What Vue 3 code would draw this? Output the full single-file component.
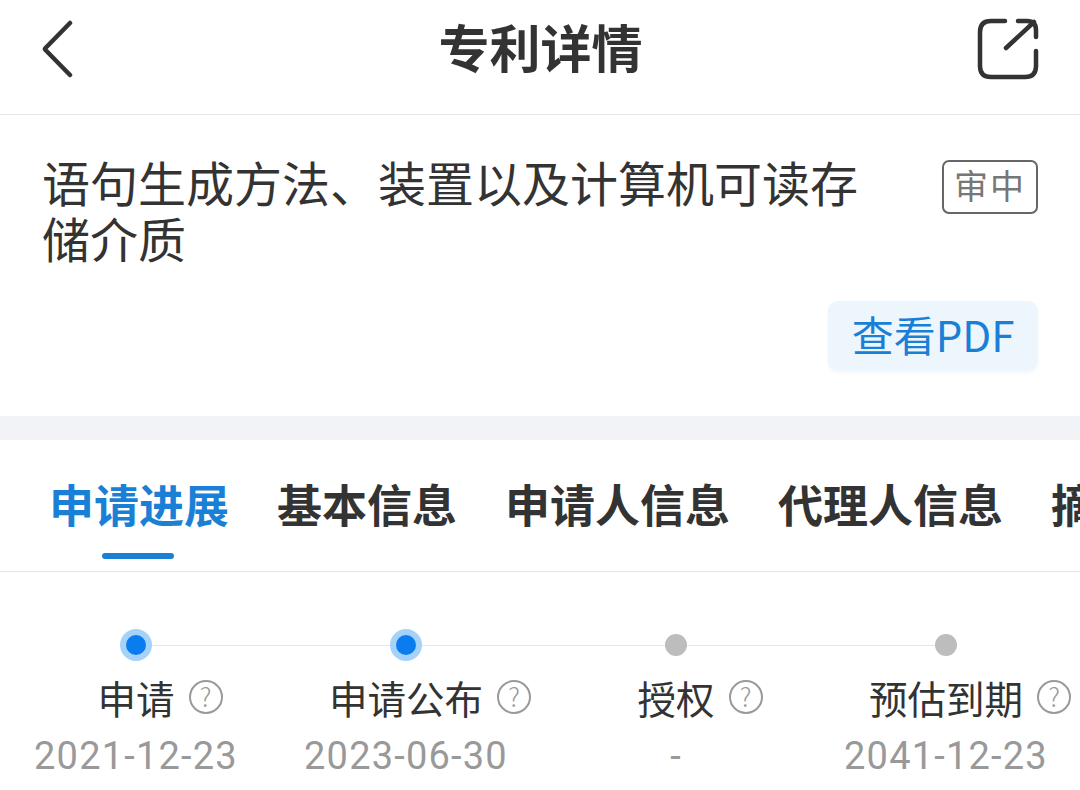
<script setup>
const tabs = ["申请进展", "基本信息", "申请人信息", "代理人信息", "摘要"];
const steps = [
  { name: "申请", date: "2021-12-23", done: true },
  { name: "申请公布", date: "2023-06-30", done: true },
  { name: "授权", date: "-", done: false },
  { name: "预估到期", date: "2041-12-23", done: false },
];
</script>

<template>
  <div class="page">
    <header class="nav">
      <svg class="back" width="34" height="60" viewBox="0 0 34 60">
        <path d="M28 4 L3.5 29 Q2.5 30 3.5 31 L28 56" />
      </svg>
      <h1 class="nav-title">专利详情</h1>
      <svg class="share" width="62" height="62" viewBox="0 0 62 62">
        <path d="M28 3 H14 Q3 3 3 14 V48 Q3 59 14 59 H48 Q59 59 59 48 V33" />
        <path d="M41 3 H50 Q59 3 59 12 V19" />
        <path d="M29 30 L57 4" />
      </svg>
    </header>

    <section class="summary">
      <div class="title-row">
        <h2 class="title">语句生成方法、装置以及计算机可读存储介质</h2>
        <span class="status">审中</span>
      </div>
      <div class="actions">
        <button class="pdf">查看PDF</button>
      </div>
    </section>

    <div class="band"></div>

    <nav class="tabs">
      <span
        v-for="(tab, i) in tabs"
        :key="tab"
        :class="['tab', { active: i === 0 }]"
      >{{ tab }}</span>
    </nav>

    <section class="steps">
      <div v-for="(step, i) in steps" :key="step.name" class="step">
        <div class="track">
          <i v-if="i > 0" class="line"></i>
          <span :class="['dot', { done: step.done }]"></span>
        </div>
        <div class="label">
          {{ step.name }}
          <span class="help">?</span>
        </div>
        <div class="date">{{ step.date }}</div>
      </div>
    </section>
  </div>
</template>

<style scoped>
.page {
  width: 1080px;
  height: 790px;
  overflow: hidden;
  background: #fff;
  color: #333;
  font-family: "Noto Sans CJK SC", "Noto Sans", sans-serif;
}

/* NAV */
.nav {
  height: 98px;
  border-bottom: 1px solid #e6e6e6;
  padding: 0 41px 16px 42px;
  display: grid;
  grid-template-columns: 1fr auto 1fr;
  align-items: center;
}
.nav svg {
  fill: none;
  stroke: #333;
  stroke-width: 4.5;
  stroke-linecap: round;
  stroke-linejoin: round;
}
.share {
  justify-self: end;
}
.nav-title {
  margin: 0 0 6px;
  font-size: 51px;
  line-height: 92px;
  font-weight: 700;
}

/* SUMMARY */
.summary {
  height: 301px;
  box-sizing: border-box;
  padding: 38px 42px 0;
}
.title-row {
  display: flex;
  justify-content: space-between;
  align-items: flex-start;
}
.title {
  margin: 0;
  width: 820px;
  font-size: 48px;
  line-height: 56px;
  font-weight: 400;
}
.status {
  margin-top: 7px;
  width: 96px;
  height: 54px;
  box-sizing: border-box;
  border: 2px solid #666;
  border-radius: 7px;
  color: #777;
  font-size: 34px;
  line-height: 46px;
  letter-spacing: 2px;
  text-align: center;
}
.actions {
  display: flex;
  justify-content: flex-end;
  margin-top: 36px;
}
.pdf {
  width: 210px;
  height: 70px;
  border: 0;
  border-radius: 10px;
  padding: 0 0 4px;
  background: #eef6fd;
  box-shadow: 0 2px 4px #f3f7fb;
  color: #1a80d6;
  font-family: inherit;
  font-size: 42px;
  line-height: 66px;
}
.band {
  height: 24px;
  background: #f2f3f6;
}

/* TABS */
.tabs {
  height: 131px;
  border-bottom: 1px solid #e6e6e6;
  padding-left: 49px;
  display: flex;
  gap: 48px;
  white-space: nowrap;
  overflow: hidden;
}
.tab {
  position: relative;
  font-size: 45px;
  line-height: 128px;
  font-weight: 700;
}
.tab.active {
  color: #1a80d6;
}
.tab.active::after {
  content: "";
  position: absolute;
  left: 53px;
  bottom: 12px;
  width: 72px;
  height: 6px;
  border-radius: 3px;
  background: #1a80d6;
}

/* STEPS */
.steps {
  display: grid;
  grid-template-columns: repeat(4, 270px);
  padding: 56px 0 0 1px;
}
.step {
  display: flex;
  flex-direction: column;
  align-items: center;
}
.track {
  position: relative;
  width: 100%;
  height: 34px;
  display: flex;
  align-items: center;
  justify-content: center;
}
.line {
  position: absolute;
  left: -135px;
  right: 135px;
  top: 17px;
  height: 1px;
  background: #e6e6e6;
}
.dot {
  position: relative;
  z-index: 1;
  width: 22px;
  height: 22px;
  border-radius: 50%;
  background: #bdbdbd;
}
.dot.done {
  width: 20px;
  height: 20px;
  background: #0a7cf0;
  border: 6px solid #a5d2f8;
}
.label {
  position: relative;
  margin-top: 10px;
  font-size: 38.5px;
  line-height: 50px;
  color: #333;
}
.help {
  position: absolute;
  left: 100%;
  top: 8px;
  margin-left: 14px;
  width: 34px;
  height: 34px;
  box-sizing: border-box;
  border: 2.5px solid #999;
  border-radius: 50%;
  color: #999;
  font-size: 26px;
  line-height: 28px;
  font-weight: 300;
  text-align: center;
}
.date {
  margin-top: 9px;
  font-family: "Roboto", sans-serif;
  font-size: 38px;
  line-height: 50px;
  letter-spacing: 1.2px;
  color: #999;
}
</style>
